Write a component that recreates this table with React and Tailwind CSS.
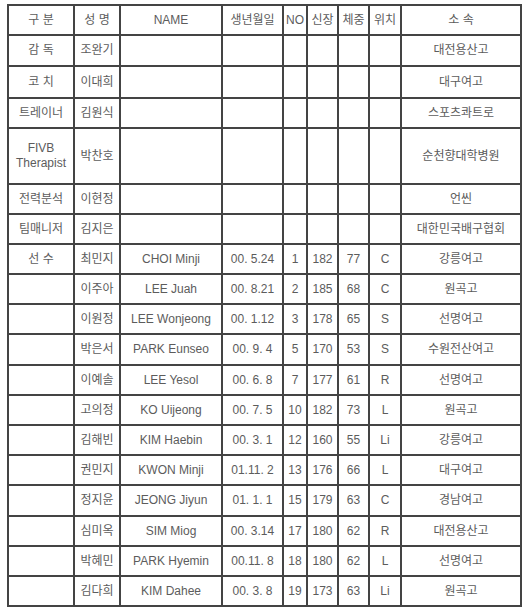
import React from 'react'

const HEAD = ['구 분', '성 명', 'NAME', '생년월일', 'NO', '신장', '체중', '위치', '소 속']

const STAFF = [
  { role: '감 독', name: '조완기', org: '대전용산고', h: 'h-[31px]' },
  { role: '코 치', name: '이대희', org: '대구여고', h: 'h-[32px]' },
  { role: '트레이너', name: '김원식', org: '스포츠콰트로', h: 'h-[30px]' },
  { role: 'FIVB\nTherapist', name: '박찬호', org: '순천향대학병원', h: 'h-[56px]' },
  { role: '전력분석', name: '이현정', org: '언씬', h: 'h-[30px]' },
  { role: '팀매니저', name: '김지은', org: '대한민국배구협회', h: 'h-[30px]' },
]

const PLAYERS = [
  ['최민지', 'CHOI Minji', '00. 5.24', '1', '182', '77', 'C', '강릉여고', 'h-[30px]'],
  ['이주아', 'LEE Juah', '00. 8.21', '2', '185', '68', 'C', '원곡고', 'h-[30px]'],
  ['이원정', 'LEE Wonjeong', '00. 1.12', '3', '178', '65', 'S', '선명여고', 'h-[30px]'],
  ['박은서', 'PARK Eunseo', '00. 9. 4', '5', '170', '53', 'S', '수원전산여고', 'h-[31px]'],
  ['이예솔', 'LEE Yesol', '00. 6. 8', '7', '177', '61', 'R', '선명여고', 'h-[30px]'],
  ['고의정', 'KO Uijeong', '00. 7. 5', '10', '182', '73', 'L', '원곡고', 'h-[30px]'],
  ['김해빈', 'KIM Haebin', '00. 3. 1', '12', '160', '55', 'Li', '강릉여고', 'h-[30px]'],
  ['권민지', 'KWON Minji', '01.11. 2', '13', '176', '66', 'L', '대구여고', 'h-[30px]'],
  ['정지윤', 'JEONG Jiyun', '01. 1. 1', '15', '179', '63', 'C', '경남여고', 'h-[31px]'],
  ['심미옥', 'SIM Miog', '00. 3.14', '17', '180', '62', 'R', '대전용산고', 'h-[30px]'],
  ['박혜민', 'PARK Hyemin', '00.11. 8', '18', '180', '62', 'L', '선명여고', 'h-[30px]'],
  ['김다희', 'KIM Dahee', '00. 3. 8', '19', '173', '63', 'Li', '원곡고', 'h-[30px]'],
]

function Cell({ children, h }) {
  return (
    <div className={`${h} flex items-center justify-center border-r-2 border-b-2 border-[#444] text-center leading-[15px] whitespace-pre`}>
      {children}
    </div>
  )
}

export default function App() {
  const rows = [
    { cells: HEAD, h: 'h-[30px]' },
    ...STAFF.map(s => ({ cells: [s.role, s.name, '', '', '', '', '', '', s.org], h: s.h })),
    ...PLAYERS.map((p, i) => ({ cells: [i === 0 ? '선 수' : '', ...p.slice(0, 8)], h: p[8] })),
  ]

  return (
    <div className="bg-white w-[528px] h-[614px] pt-[4px] pl-[7px] text-[12px] text-[#5c5c5c] font-['Liberation_Sans','Noto_Sans_CJK_KR',sans-serif]">
      <div className="w-[515px] grid grid-cols-[66px_46px_102px_61px_24px_31px_31px_32px_120px] border-l-2 border-t-2 border-[#444]">
        {rows.map((r, ri) =>
          r.cells.map((c, ci) => (
            <Cell key={ri + '-' + ci} h={r.h}>{c}</Cell>
          ))
        )}
      </div>
    </div>
  )
}
